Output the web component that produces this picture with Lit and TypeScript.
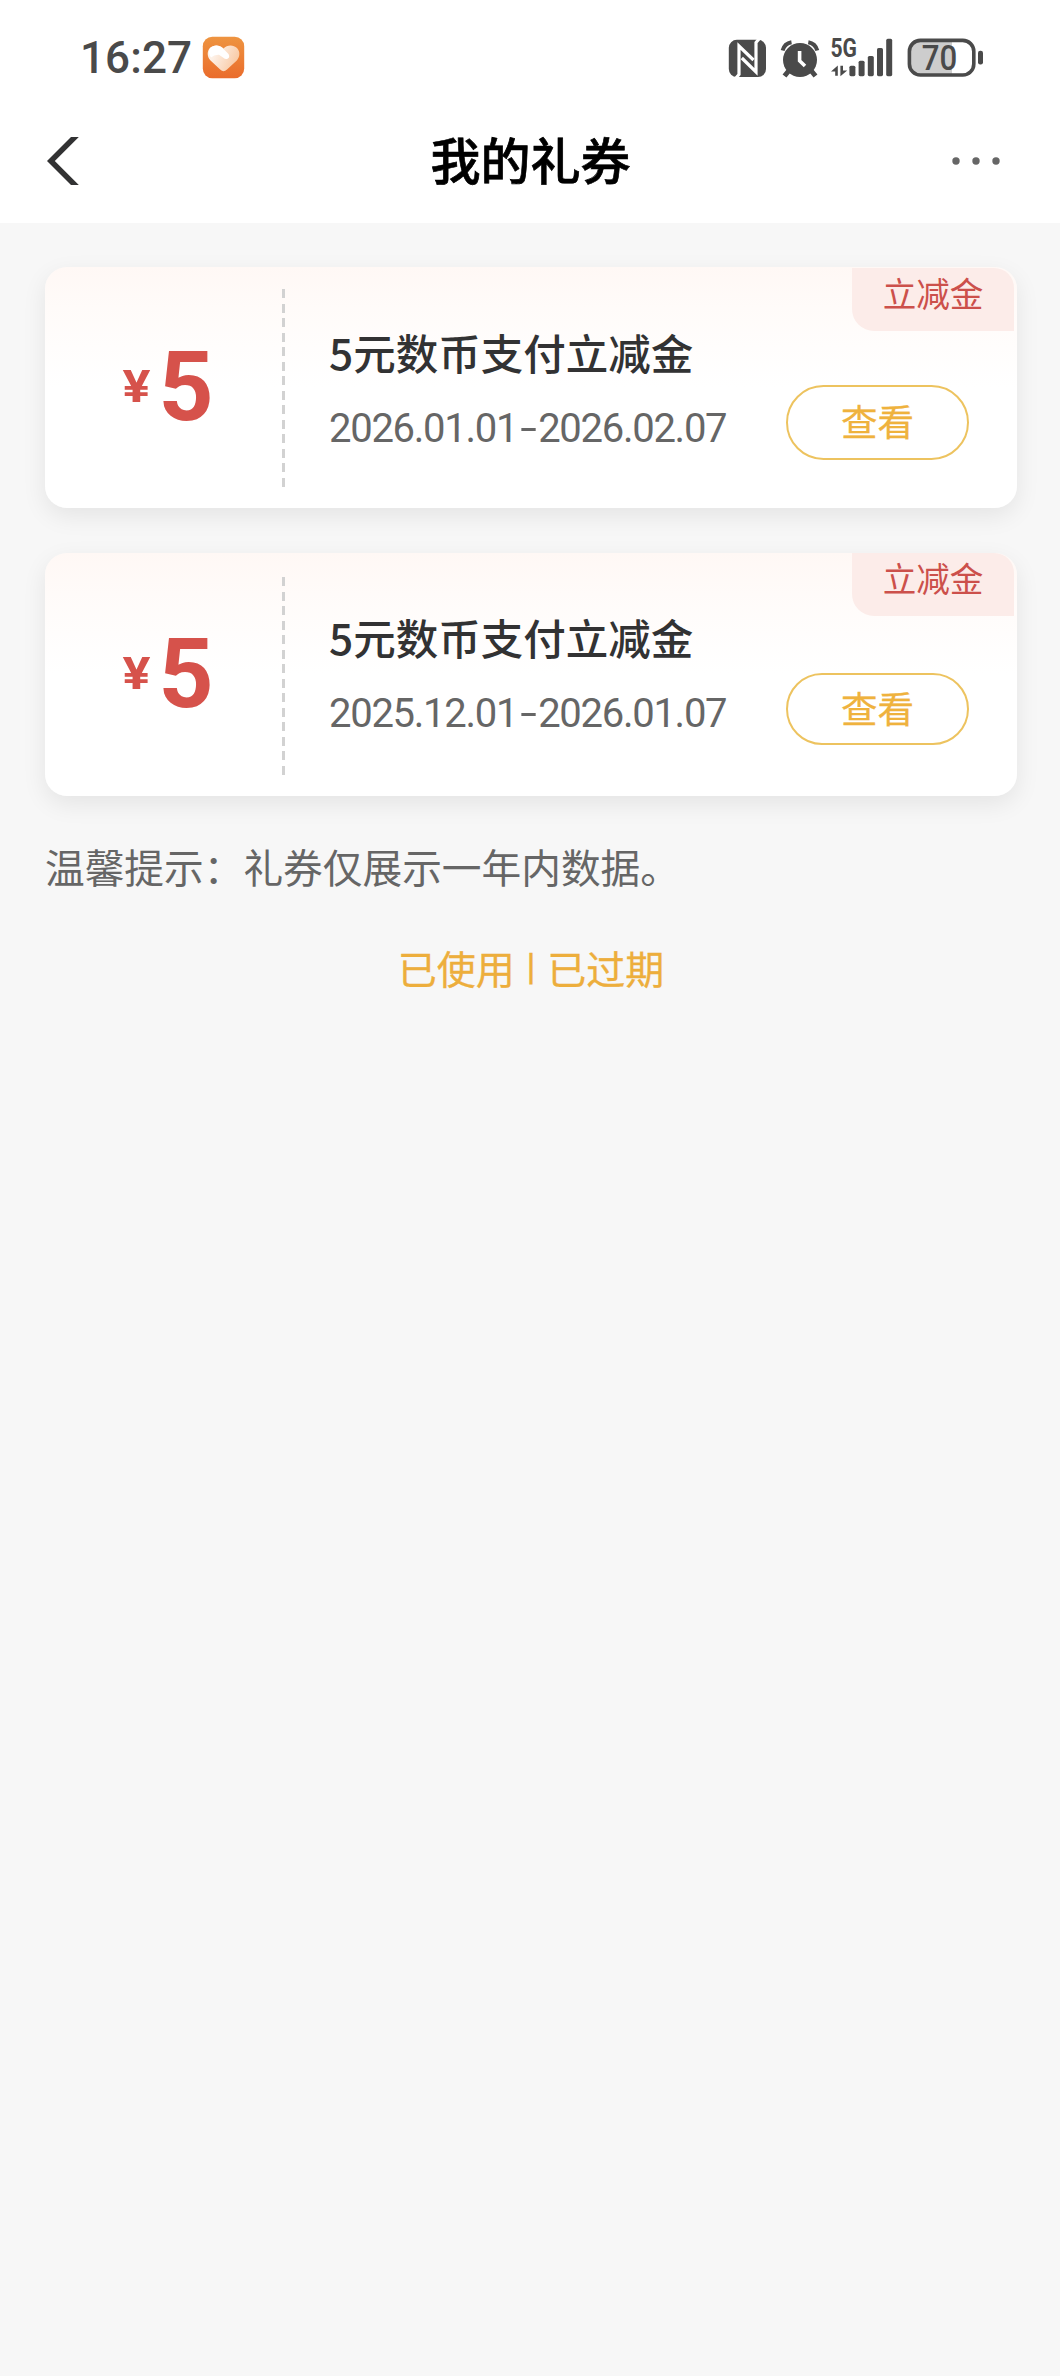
import { LitElement, html, css, svg } from "lit";
import { customElement, property } from "lit/decorators.js";
import { classMap } from "lit/directives/class-map.js";

interface Coupon {
  amount: string;
  title: string;
  from: string;
  to: string;
  tag: string;
}

const COUPONS: Coupon[] = [
  { amount: "5", title: "5元数币支付立减金", from: "2026.01.01", to: "2026.02.07", tag: "立减金" },
  { amount: "5", title: "5元数币支付立减金", from: "2025.12.01", to: "2026.01.07", tag: "立减金" },
];

const SIGNAL = [
  [849.4, 65.7],
  [858.6, 60.7],
  [867.8, 56],
  [877, 48],
  [886.2, 38.8],
];

@customElement("status-bar")
class StatusBar extends LitElement {
  static styles = css`
    :host {
      display: flex;
      justify-content: space-between;
      height: 100px;
      color: #4a4a4a;
    }
    .left {
      display: flex;
      align-items: center;
      padding: 15px 0 0 80px;
      box-sizing: border-box;
    }
    .time {
      font: 500 44px/50px Roboto, "Liberation Sans", sans-serif;
      letter-spacing: 0.1px;
      width: 122px;
      white-space: nowrap;
    }
    svg {
      display: block;
    }
    .num {
      font-family: Roboto, "Liberation Sans", sans-serif;
    }
  `;

  render() {
    return html`
      <div class="left">
        <span class="time">16:27</span>
        <svg width="43" height="43" viewBox="0 0 43 43">
          <defs>
            <linearGradient id="o" x1="0" y1="0" x2="0" y2="1">
              <stop offset="0" stop-color="#ee9440" />
              <stop offset="1" stop-color="#ea6c2c" />
            </linearGradient>
            <linearGradient id="h" x1="0" y1="0" x2="1" y2="0.4">
              <stop offset="0.3" stop-color="#fdf0e6" />
              <stop offset="1" stop-color="#f9cba6" />
            </linearGradient>
          </defs>
          <rect x=".8" y=".8" width="41.4" height="41.4" rx="9.5" fill="url(#o)" />
          <path d="M21.500 12.500C25 8.600 31.500 8.600 35 12C38.400 15.500 38 21 34.800 24.400L25 33.600Q21.500 36.800 18.200 33.600L8.500 24.400C5 21 4.800 15.200 8 12C11.500 8.600 18 8.600 21.500 12.500Z" fill="url(#h)" />
          <path d="M8 12C11.500 8.600 17 8.600 20.500 12L26.500 18Q28.300 21.500 25.500 22.800Q23.500 23.600 21 21.500L17 18.800Q12 18.500 9 21.500Q5.500 17 8 12Z" fill="#fff" />
        </svg>
      </div>
      <svg width="350" height="100" viewBox="710 0 350 100" fill="#4a4a4a">
        <rect x="728.800" y="39.800" width="37.200" height="37.200" rx="8" />
        <path d="M736 78L739 74.500V46L753.500 60" fill="none" stroke="#fff" stroke-width="3.200" />
        <path d="M759 39L756 42.500V72L741.800 58" fill="none" stroke="#fff" stroke-width="3.200" />

        <circle cx="800" cy="60" r="17" />
        <path d="M782.600 50.500Q784.500 43.500 791.500 42.300M808.300 42.300Q815.300 43.500 817.300 50.500" fill="none" stroke="#4a4a4a" stroke-width="4" />
        <path d="M789 70.500L784.500 76M811 70.500L815.500 76" stroke="#4a4a4a" stroke-width="5" />
        <path d="M799.600 51V60.800L805 66" fill="none" stroke="#fff" stroke-width="3.600" />

        <text class="num" x="830.500" y="56.800" font-size="25" font-weight="700" textLength="26.500" lengthAdjust="spacingAndGlyphs">5G</text>
        <path d="M831 71.500L837.800 65.500V75.800H835.200V71.500ZM847.200 70.500L840.400 76.300V65.800H843V70.500Z" />
        ${SIGNAL.map(([x, y]) => svg`<rect x=${x} y=${y} width="6" height=${76.2 - y} rx="1.600" />`)}

        <path d="M952 41H920Q910 41 910 51V64Q910 74 920 74H952Z" fill="#cdcdcd" />
        <rect x="909.400" y="40.400" width="64.400" height="34.600" rx="11" fill="none" stroke="#4a4a4a" stroke-width="3.600" />
        <rect x="978" y="50.800" width="5" height="13.600" rx="2.200" />
        <text class="num" x="921.800" y="69.800" font-size="34.500" font-weight="500" textLength="35.500" lengthAdjust="spacingAndGlyphs">70</text>
      </svg>
    `;
  }
}

@customElement("nav-header")
class NavHeader extends LitElement {
  static styles = css`
    :host {
      display: grid;
      grid-template-columns: 300px 1fr 300px;
      align-items: center;
      height: 122px;
    }
    .title {
      padding: 0 0 7px 1px;
      text-align: center;
      font: 500 50px/72px "Noto Sans CJK SC", sans-serif;
      -webkit-text-stroke: 0.7px #000;
      color: #000;
    }
    svg {
      display: block;
    }
    .more {
      justify-self: end;
    }
  `;

  render() {
    return html`
      <svg width="100" height="122" viewBox="0 100 100 122">
        <path d="M47 161L71 137H78.800L54.800 161L78.800 185H71Z" fill="#323233" />
      </svg>
      <div class="title">我的礼券</div>
      <svg class="more" width="120" height="122" viewBox="940 100 120 122" fill="#666">
        <circle cx="956" cy="161" r="3.700" />
        <circle cx="976" cy="161" r="3.700" />
        <circle cx="996" cy="161" r="3.700" />
      </svg>
    `;
  }
}

@customElement("coupon-card")
class CouponCard extends LitElement {
  @property({ attribute: false }) coupon!: Coupon;
  @property({ type: Boolean }) first = false;

  static styles = css`
    :host {
      display: block;
    }
    .card {
      position: relative;
      display: grid;
      grid-template-columns: 237px 3px 1fr 183px;
      box-sizing: border-box;
      height: 243px;
      padding-right: 48px;
      border-radius: 22px;
      background: linear-gradient(#fff8f5, #fffbf9 40px, #fff 120px);
      box-shadow: 0 8px 24px rgba(0, 0, 0, 0.08);
    }
    .first {
      height: 241px;
    }
    .amount {
      display: flex;
      align-items: baseline;
      padding: 65px 0 0 78px;
      color: #d6524b;
      font: 700 45px/112px Roboto, "Liberation Sans", sans-serif;
    }
    .first .amount {
      padding-top: 64px;
    }
    .yen {
      width: 36px;
      transform: translate(-0.5px, -18px) scaleX(1.16);
      transform-origin: left;
    }
    .value {
      font-size: 96px;
      transform: translateX(-0.5px);
    }
    .line {
      margin-top: 24px;
      height: 198px;
      background: repeating-linear-gradient(#d2d2d2 0 9px, transparent 9px 14.53px);
    }
    .first .line {
      margin-top: 22px;
    }
    .info {
      padding: 54px 0 0 43px;
      white-space: nowrap;
    }
    .first .info {
      padding-top: 55px;
    }
    .title {
      padding-left: 1px;
      font: 500 42.500px/60px "Noto Sans CJK SC", sans-serif;
      color: #323233;
    }
    .date {
      margin-top: 19px;
      padding-left: 1px;
      font: 400 40px/56px Roboto, "Liberation Sans", sans-serif;
      letter-spacing: -1.28px;
      color: #666;
    }
    .dash {
      display: inline-block;
      width: 21px;
      text-align: center;
      transform: scaleX(1.500);
    }
    .view {
      box-sizing: border-box;
      width: 183px;
      height: 72px;
      margin: 120px 0 0;
      padding: 0 0 3px;
      border: 2px solid #edc35f;
      border-radius: 38px;
      background: #fff;
      color: #efb23d;
      font: 400 36.500px/64px "Noto Sans CJK SC", sans-serif;
      -webkit-text-stroke: 0.3px #efb23d;
    }
    .first .view {
      height: 75px;
      margin-top: 118px;
    }
    .tag {
      position: absolute;
      top: 0;
      right: 3px;
      box-sizing: border-box;
      width: 162px;
      height: 63px;
      border-radius: 0 20px 0 22px;
      background: #fcece9;
      color: #cc504b;
      text-align: center;
      font: 400 33.600px/50px "Noto Sans CJK SC", sans-serif;
    }
    .first .tag {
      top: 1px;
    }
  `;

  render() {
    const c = this.coupon;
    return html`
      <div class=${classMap({ card: true, first: this.first })}>
        <div class="amount"><span class="yen">¥</span><span class="value">${c.amount}</span></div>
        <div class="line"></div>
        <div class="info">
          <div class="title">${c.title}</div>
          <div class="date">${c.from}<span class="dash">-</span>${c.to}</div>
        </div>
        <button class="view">查看</button>
        <div class="tag">${c.tag}</div>
      </div>
    `;
  }
}

@customElement("app-root")
class AppRoot extends LitElement {
  static styles = css`
    :host {
      display: block;
      width: 1060px;
      height: 2376px;
      overflow: hidden;
      background: #f7f7f7;
      font-family: "Noto Sans CJK SC", sans-serif;
    }
    .top {
      height: 223px;
      background: #fff;
    }
    .list {
      display: flex;
      flex-direction: column;
      gap: 45px;
      padding: 44px 43px 0 45px;
    }
    .tip {
      padding: 41px 0 0 45px;
      font-size: 39.700px;
      line-height: 58px;
      color: #666;
    }
    .links {
      display: flex;
      justify-content: center;
      padding: 43px 0 0 2px;
      font-size: 39px;
      line-height: 58px;
      color: #edae3c;
      -webkit-text-stroke: 0.3px #edae3c;
    }
    .sep {
      width: 32.600px;
      text-align: center;
      font: 500 36px/58px Roboto, sans-serif;
    }
  `;

  render() {
    return html`
      <div class="top">
        <status-bar></status-bar>
        <nav-header></nav-header>
      </div>
      <div class="list">
        ${COUPONS.map((c, i) => html`<coupon-card .coupon=${c} ?first=${i === 0}></coupon-card>`)}
      </div>
      <div class="tip">温馨提示：礼券仅展示一年内数据。</div>
      <div class="links"><span>已使用</span><span class="sep">|</span><span>已过期</span></div>
    `;
  }
}
